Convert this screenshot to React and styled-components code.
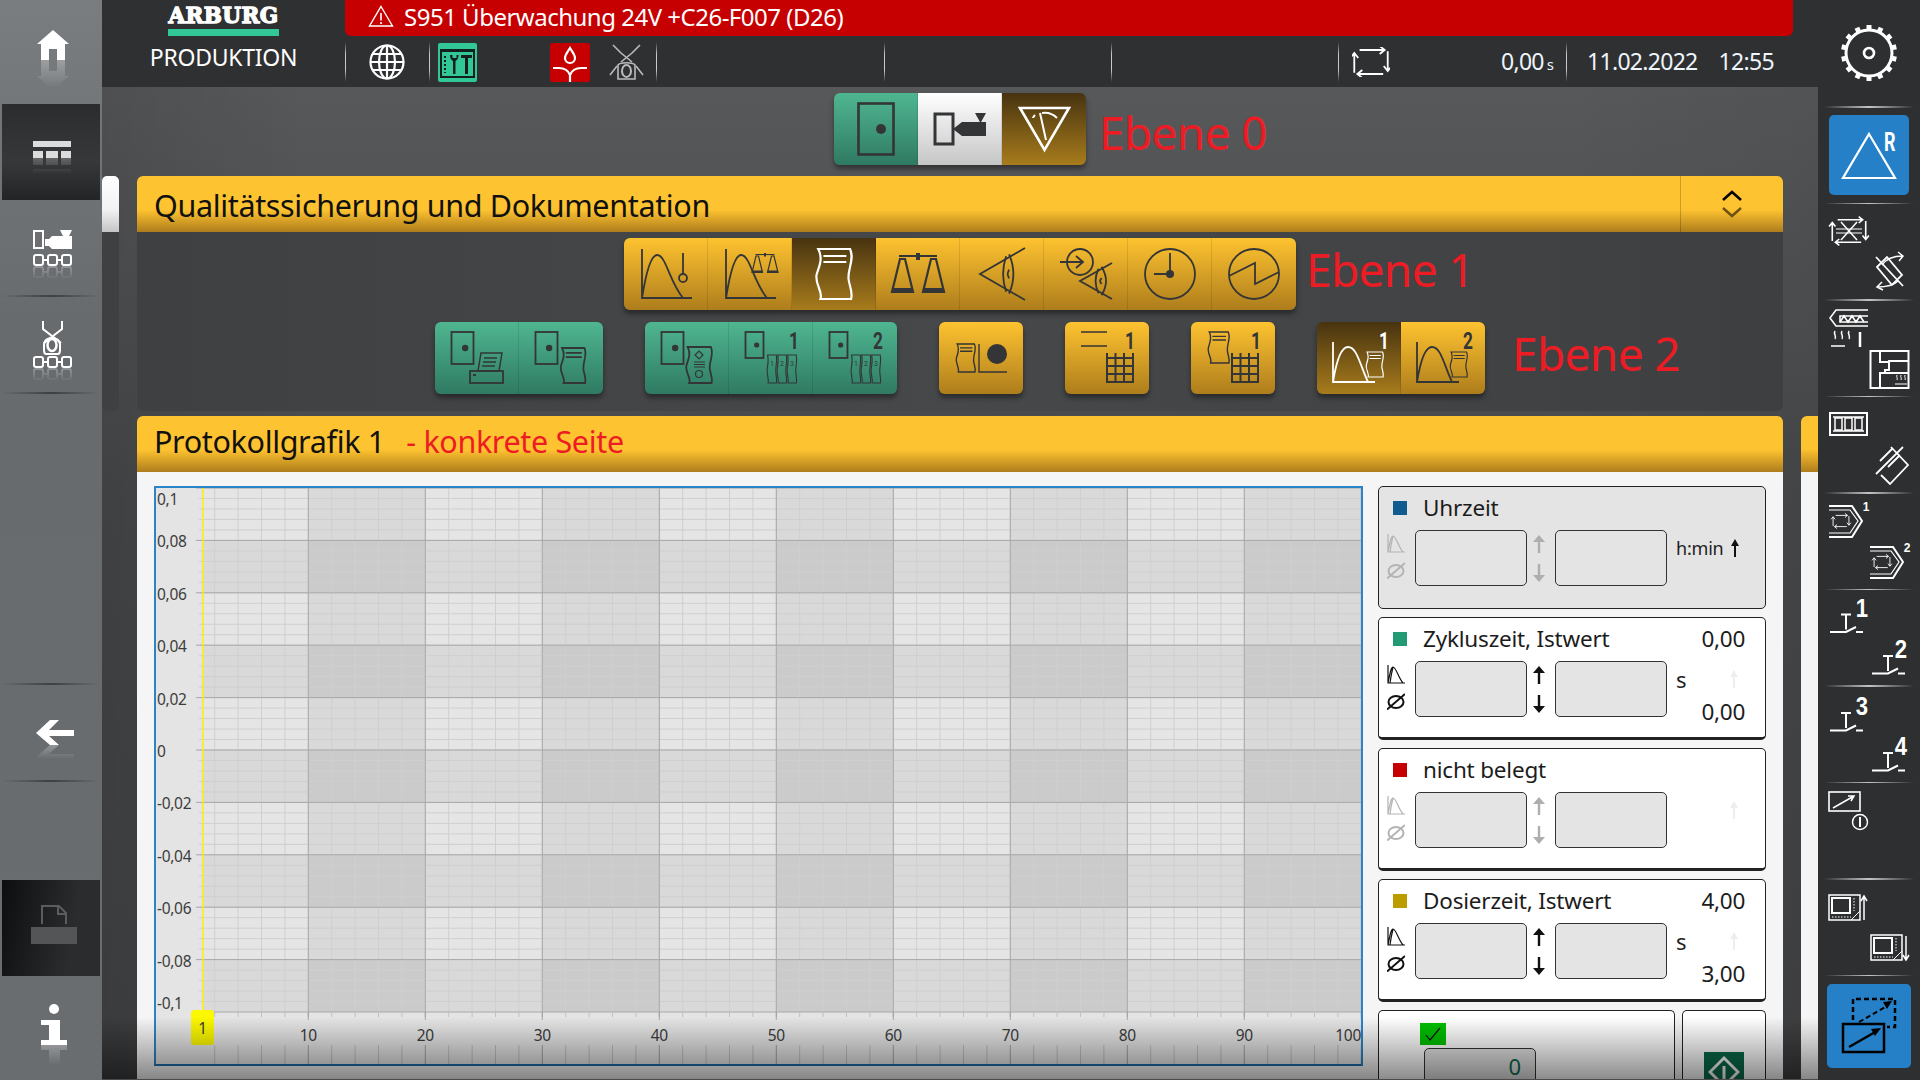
import styled, { createGlobalStyle } from 'styled-components'

const FONT = '"Noto Sans", "Open Sans", sans-serif'
const INK = '#333537'

const GlobalStyle = createGlobalStyle`
  html, body { margin: 0; padding: 0; background: #2e2f31; }
  body { font-family: ${FONT}; }
`

const Screen = styled.div`
  width: 1920px;
  height: 1080px;
  overflow: hidden;
  display: grid;
  grid-template-columns: 102px 1fr 102px;
  grid-template-rows: 1080px;
`

/* ---------- left rail ---------- */
const LeftRail = styled.nav`
  display: flex;
  flex-direction: column;
  min-height: 0;
  background: linear-gradient(#7a7d80, #686b6e 30%, #6a6d70);
`
const RailItem = styled.div`
  position: relative;
  flex: ${p => (p.$grow ? '1' : `0 0 ${p.$h}px`)};
  ${p => p.$rule && `
    &::after {
      content: '';
      position: absolute;
      left: 2px;
      right: 2px;
      bottom: 0;
      height: 2px;
      background: linear-gradient(90deg, transparent, #3d3f41 50%, transparent);
    }
  `}
  svg { display: block; }
`
const RailActive = styled.div`
  flex: 0 0 96px;
  margin: 0 2px;
  background: ${p => (p.$dim
    ? 'linear-gradient(100deg, #0d0e0f, #2a2c2e 70%)'
    : 'linear-gradient(#2b2c2e, #37383a 60%, #232426)')};
  svg { display: block; margin-left: -2px; }
`

const Mirror = ({ id, axis, fade = 28, children }) => (
  <>
    <defs>
      <linearGradient id={`${id}g`} gradientUnits="userSpaceOnUse" x1="0" x2="0" y1={axis} y2={axis + fade}>
        <stop offset="0" stopColor="#fff" stopOpacity=".28" />
        <stop offset="1" stopColor="#fff" stopOpacity="0" />
      </linearGradient>
      <mask id={id} maskUnits="userSpaceOnUse" x="0" y="0" width="102" height="200">
        <rect x="0" y={axis} width="102" height={fade} fill={`url(#${id}g)`} />
      </mask>
    </defs>
    {children}
    <g mask={`url(#${id})`}>
      <g transform={`translate(0 ${2 * axis}) scale(1 -1)`}>{children}</g>
    </g>
  </>
)

const Chain = ({ y }) => (
  <g fill="none" stroke="#fff" strokeWidth="2">
    <rect x="34" y={y} width="9" height="10" rx="2" />
    <rect x="48" y={y} width="9" height="10" rx="2" />
    <rect x="62" y={y} width="9" height="10" rx="2" />
    <path d={`M43 ${y + 5}h5M57 ${y + 5}h5`} />
  </g>
)

const LeftRailContent = () => (
  <LeftRail>
    <RailItem $h={104}>
      <svg width="102" height="104">
        <Mirror id="mHome" axis={60}>
          <path fill="#fff" d="M53 30l16 14h-4v16h-8V49h-8v11h-8V44h-4z" />
        </Mirror>
      </svg>
    </RailItem>
    <RailActive>
      <svg width="102" height="96">
        <Mirror id="mMenu" axis={54} fade={16}>
          <g fill="#dcdcdc">
            <rect x="33" y="37" width="38" height="6" />
            <rect x="33" y="47" width="10" height="7" />
            <rect x="46" y="47" width="12" height="7" />
            <rect x="61" y="47" width="10" height="7" />
          </g>
        </Mirror>
      </svg>
    </RailActive>
    <RailItem $h={97} $rule>
      <svg width="102" height="97">
        <Mirror id="mMach" axis={66} fade={14}>
          <rect x="34" y="31" width="9" height="17" fill="none" stroke="#fff" strokeWidth="2" />
          <path fill="#fff" d="M45 39h4l3-3h20v13H52l-3-3h-4zM60 30h12l-3 6h-6z" />
          <Chain y={55} />
        </Mirror>
      </svg>
    </RailItem>
    <RailItem $h={97} $rule>
      <svg width="102" height="97">
        <Mirror id="mMold" axis={71} fade={14}>
          <g fill="none" stroke="#fff" strokeWidth="2">
            <path d="M43 24v8l18 14M62 24v8L44 46" />
            <path d="M44 48c0-5 4-7 8-7s8 2 8 7v5c0 3-1 4-2 4H46c-1 0-2-1-2-4z" />
            <ellipse cx="52" cy="48" rx="4.5" ry="6" strokeWidth="2.5" />
          </g>
          <Chain y={60} />
        </Mirror>
      </svg>
    </RailItem>
    <RailItem $grow $rule />
    <RailItem $h={97} $rule>
      <svg width="102" height="97">
        <Mirror id="mBack" axis={60} fade={14}>
          <path fill="#fff" d="M36 48l14-13h9l-10 10h25v6H49l10 9h-9z" />
        </Mirror>
      </svg>
    </RailItem>
    <RailItem $h={98} />
    <RailActive $dim>
      <svg width="102" height="96">
        <g fill="none" stroke="#5b5c5e" strokeWidth="2">
          <path d="M42 44V26h17l7 7v11M58 26v8h8" />
        </g>
        <rect x="31" y="47" width="46" height="17" fill="#545556" />
      </svg>
    </RailActive>
    <RailItem $h={104}>
      <svg width="102" height="104">
        <Mirror id="mInfo" axis={69} fade={20}>
          <circle cx="54" cy="33" r="5" fill="#fff" />
          <path fill="#fff" d="M41 44h19v20h7v5H41v-5h8V49h-8z" />
        </Mirror>
      </svg>
    </RailItem>
  </LeftRail>
)

/* ---------- header ---------- */
const Header = styled.header`
  flex: 0 0 87px;
  display: flex;
  background: #2f3032;
  color: #fff;
`
const Brand = styled.div`
  flex: 0 0 243px;
  display: flex;
  flex-direction: column;
  align-items: center;
`
const LogoText = styled.div`
  margin-top: 2px;
  height: 27px;
  line-height: 27px;
  font-family: "DejaVu Serif", serif;
  font-weight: 700;
  font-size: 21.500px;
  letter-spacing: 0.4px;
  -webkit-text-stroke: 1.3px #fff;
`
const LogoBar = styled.div`
  width: 111px;
  height: 7px;
  background: #31c796;
`
const ModeLabel = styled.div`
  margin-top: 4px;
  font-size: 23px;
  line-height: 34px;
  letter-spacing: -0.25px;
`
const HeaderRest = styled.div`
  flex: 1;
  display: flex;
  flex-direction: column;
`
const AlarmBar = styled.div`
  height: 36px;
  margin-right: 25px;
  padding: 0 0 4px 23px;
  box-sizing: border-box;
  display: flex;
  align-items: center;
  gap: 10px;
  background: #c60000;
  border-radius: 0 0 6px 6px;
  font-size: 24px;
  letter-spacing: -0.5px;
`
const StatusRow = styled.div`
  display: flex;
  height: 40px;
  margin-top: 6px;
`
const StatusCell = styled.div`
  position: relative;
  flex: 0 0 ${p => p.$w}px;
  display: flex;
  align-items: center;
  justify-content: ${p => p.$justify || 'flex-start'};
  padding: 0 ${p => p.$pr || 0}px 0 ${p => p.$pl || 0}px;
  box-sizing: border-box;
  &::before {
    content: '';
    position: absolute;
    left: 0;
    top: 0;
    bottom: 0;
    width: 1px;
    background: linear-gradient(transparent, #c8c8c8 30%, #c8c8c8 70%, transparent);
  }
`
const TileIcon = styled.svg`
  flex: none;
  margin-left: ${p => p.$ml || 0}px;
  display: block;
`
const StatusText = styled.span`
  font-size: 23px;
  letter-spacing: -0.7px;
  color: #eef5fb;
  margin: 0 0 3px ${p => p.$ml || 0}px;
`
const TimerText = styled(StatusText)`
  margin-left: auto;
  small { font-size: 15px; margin-left: 3px; letter-spacing: 0; }
`

const CycleArrows = ({ x, y, w, h, sw = 1.6, a = 4, color = '#fff' }) => {
  const xl = x + 0.06 * w
  const xr = x + 0.94 * w
  const yt = y + 0.1 * h
  const yb = y + 0.9 * h
  return (
    <g fill="none" stroke={color} strokeWidth={sw}>
      <path d={`M${x + 0.2 * w} ${yt}H${x + 0.86 * w}m-${a} -${a * 0.8}l${a} ${a * 0.8}l-${a} ${a * 0.8}`} />
      <path d={`M${xr} ${y + 0.14 * h}V${y + 0.8 * h}m-${a * 0.8} -${a}l${a * 0.8} ${a}l${a * 0.8} -${a}`} />
      <path d={`M${x + 0.82 * w} ${yb}H${x + 0.14 * w}m${a} -${a * 0.8}l-${a} ${a * 0.8}l${a} ${a * 0.8}`} />
      <path d={`M${xl} ${y + 0.86 * h}V${y + 0.2 * h}m-${a * 0.8} ${a}l${a * 0.8} -${a}l${a * 0.8} ${a}`} />
    </g>
  )
}

const HeaderBar = () => (
  <Header>
    <Brand>
      <LogoText>ARBURG</LogoText>
      <LogoBar />
      <ModeLabel>PRODUKTION</ModeLabel>
    </Brand>
    <HeaderRest>
      <AlarmBar>
        <svg width="26" height="22" viewBox="0 0 26 22">
          <path d="M13 1.5L24.5 21H1.5z" fill="none" stroke="#fff" strokeWidth="1.4" />
          <path d="M13 8v7.5M13 17v2" stroke="#fff" strokeWidth="1.6" />
        </svg>
        <span>S951 Überwachung 24V +C26-F007 (D26)</span>
      </AlarmBar>
      <StatusRow>
        <StatusCell $w={84} $justify="center">
          <TileIcon width="36" height="36" viewBox="0 0 36 36" fill="none" stroke="#fff" strokeWidth="2.2">
            <circle cx="18" cy="18" r="16.5" />
            <ellipse cx="18" cy="18" rx="8" ry="16.5" />
            <path d="M18 1.5v33M1.5 18h33M4 10h28M4 26h28" />
          </TileIcon>
        </StatusCell>
        <StatusCell $w={227} $pl={9}>
          <TileIcon width="39" height="39" viewBox="0 0 39 39">
            <rect width="39" height="39" rx="2" fill="#31c796" />
            <rect x="3" y="7" width="33" height="27" fill="none" stroke="#15201c" strokeWidth="2" />
            <path d="M3 6h33v3H3z" fill="#15201c" />
            <path d="M7 13v17" stroke="#15201c" strokeWidth="2" strokeDasharray="2 2" />
            <path d="M12 12c0 3 1 5 3 6v13h2.500V18c2-1 3-3 3-6h-2v3h-4v-3zM23 12h11v3h-4v16h-3V15h-4z" fill="#15201c" />
          </TileIcon>
          <TileIcon $ml={73} width="40" height="39" viewBox="0 0 40 39">
            <rect width="40" height="39" rx="2" fill="#c60000" />
            <path d="M20 5c-3 5-5 7-5 10a5 5 0 0 0 10 0c0-3-2-5-5-10z" fill="none" stroke="#fff" strokeWidth="2.2" />
            <path d="M3 25h6c5 0 9 2 11 7 2-5 6-7 11-7h6M20 32v7" fill="none" stroke="#fff" strokeWidth="2.2" />
          </TileIcon>
          <TileIcon $ml={19} width="35" height="37" viewBox="0 0 35 37" fill="none" stroke="#bbb" strokeWidth="1.6">
            <path d="M4 1l8 8 11 9M31 1l-8 8-11 9M8 22l-7 9M27 22l7 9" />
            <path d="M9 21c2-3 15-3 17 0v14H9z" />
            <ellipse cx="17.5" cy="27" rx="4.5" ry="6" strokeWidth="2" />
          </TileIcon>
        </StatusCell>
        <StatusCell $w={228} />
        <StatusCell $w={227} />
        <StatusCell $w={227} />
        <StatusCell $w={228} $pl={14} $pr={12}>
          <TileIcon width="38" height="30" viewBox="0 0 38 30">
            <CycleArrows x={0} y={0} w={38} h={30} sw={1.8} a={5} />
          </TileIcon>
          <TimerText>0,00<small>s</small></TimerText>
        </StatusCell>
        <StatusCell $w={220} $pl={21}>
          <StatusText>11.02.2022</StatusText>
          <StatusText $ml={21}>12:55</StatusText>
        </StatusCell>
      </StatusRow>
    </HeaderRest>
  </Header>
)

/* ---------- level buttons ---------- */
const tones = {
  yellow: 'linear-gradient(#fec330, #ae7d1c)',
  green: 'linear-gradient(#4fb691, #2f7a62)',
  white: 'linear-gradient(#fff, #c6c6c6)',
  dark: 'linear-gradient(#473310, #a87c1c)',
}
const LevelRow = styled.div`
  display: grid;
  grid-template-columns: 1fr auto 1fr;
  align-items: center;
`
const CenterGroup = styled.div`
  grid-column: 2;
  display: flex;
  gap: 42px;
`
const ButtonGroup = styled.div`
  display: flex;
  border-radius: 6px;
  overflow: hidden;
  box-shadow: 0 4px 5px rgba(0, 0, 0, 0.4);
`
const LevelButton = styled.button`
  width: 84px;
  height: 72px;
  padding: 0;
  border: 0;
  background: ${p => tones[p.$tone]};
  color: ${p => (p.$tone === 'dark' ? '#fff' : INK)};
  & + & { box-shadow: -1px 0 0 rgba(0, 0, 0, 0.1); }
  svg {
    display: block;
    fill: none;
    stroke: currentColor;
    stroke-width: 1.8;
  }
  svg .solid { fill: currentColor; stroke: none; }
  svg text {
    fill: currentColor;
    stroke: none;
    font-family: "Roboto", ${FONT};
    font-weight: 700;
  }
  svg text.small { font-weight: 400; }
`
const Annotation = styled.div`
  margin: ${p => p.$top || 0}px 0 0 ${p => p.$left}px;
  font-size: 46px;
  font-weight: 400;
  line-height: 1;
  letter-spacing: -0.65px;
  color: #ed1c24;
  white-space: nowrap;
`

const wavy = (x, y, w, h) =>
  `M${x + 0.06 * w} ${y}H${x + 0.92 * w}C${x + 1.05 * w} ${y + 0.2 * h} ${x + 0.85 * w} ${y + 0.4 * h} ${x + 0.88 * w} ${y + 0.6 * h}` +
  `C${x + 0.9 * w} ${y + 0.75 * h} ${x + 1.0 * w} ${y + 0.85 * h} ${x + 0.95 * w} ${y + h}H${x + 0.12 * w}` +
  `C${x + 0.2 * w} ${y + 0.85 * h} ${x - 0.05 * w} ${y + 0.7 * h} ${x + 0.02 * w} ${y + 0.5 * h}C${x + 0.08 * w} ${y + 0.35 * h} ${x + 0.2 * w} ${y + 0.2 * h} ${x + 0.06 * w} ${y}Z`

const Doc = ({ x, y, w, h, lines = true, sw }) => (
  <g strokeWidth={sw}>
    <path d={wavy(x, y, w, h)} />
    {lines && (
      <path d={`M${x + 0.2 * w} ${y + 0.14 * h}h${0.62 * w}M${x + 0.2 * w} ${y + 0.26 * h}h${0.62 * w}`} />
    )}
  </g>
)
const Door = ({ x = 16.5, w = 22, h = 32, r = 3.2 }) => (
  <g>
    <rect x={x} y="10" width={w} height={h} />
    <circle className="solid" cx={x + w * 0.62} cy={10 + h / 2} r={r} />
  </g>
)
const Peak = ({ left = 18, top = 11, end = 60, right = 68, peakX = 33, peakY = 17 }) => (
  <path d={`M${left} ${top}V60H${right}M${left} 60C${left + 4} 35 ${peakX - 6} ${peakY} ${peakX} ${peakY}C${peakX + 9} ${peakY} ${peakX + 12} 43 ${end} 60`} />
)
const Scale = ({ cx, y, s = 1, sw = 2.2 }) => (
  <g transform={`translate(${cx} ${y}) scale(${s})`}>
    <path strokeWidth={sw / s} d="M-19 3H19" />
    <rect className="solid" x="-2" y="0" width="4" height="7" />
    <path strokeWidth={sw / s} d="M-18 6h5l8 33h-21zM13 6h5l8 33H5z" />
    <rect className="solid" x="-26" y="35" width="21" height="4" />
    <rect className="solid" x="5" y="35" width="21" height="4" />
  </g>
)
const Grid4 = ({ x }) => (
  <path strokeWidth="2" d={`M${x} 31v30M${x + 8.5} 31v30M${x + 17} 31v30M${x + 26} 31v30M${x} 36h26M${x} 44h26M${x} 52h26M${x} 60h26`} />
)
const Num = ({ x = 65, y = 27, children }) => (
  <text transform={`translate(${x} ${y}) scale(.72 1)`} fontSize="24" textAnchor="middle">{children}</text>
)
const Triple = () => (
  <g>
    <path strokeWidth="1.1" d={wavy(38, 33, 10, 28)} />
    <path strokeWidth="1.1" d={wavy(48, 33, 10, 28)} />
    <path strokeWidth="1.1" d={wavy(58, 33, 10, 28)} />
    <text className="small" x="43" y="44" fontSize="7" textAnchor="middle">1</text>
    <text className="small" x="53" y="44" fontSize="7" textAnchor="middle">2</text>
    <text className="small" x="63" y="44" fontSize="7" textAnchor="middle">3</text>
  </g>
)
const Eye = ({ tip, top, bottom, right }) => {
  const my = (top + bottom) / 2
  const k = (right - tip) * 0.58 + tip
  const d = (bottom - top) * 0.34
  return (
    <g>
      <path d={`M${right} ${top}L${tip} ${my}L${right} ${bottom}`} />
      <path d={`M${k} ${my - d}C${k - 4} ${my - d / 3} ${k - 4} ${my + d / 3} ${k} ${my + d}`} />
      <path d={`M${k + 3} ${my - d - 2}C${k + 9} ${my - d / 3} ${k + 9} ${my + d / 3} ${k + 3} ${my + d + 2}`} />
      <path d={`M${k + 3} ${my - d / 4}C${k + 1} ${my} ${k + 1} ${my} ${k + 3} ${my + d / 4}`} />
    </g>
  )
}

const B = ({ tone, children }) => (
  <LevelButton $tone={tone}>
    <svg width="84" height="72" viewBox="0 0 84 72">{children}</svg>
  </LevelButton>
)

const LevelZero = () => (
  <LevelRow>
    <CenterGroup>
      <ButtonGroup>
        <B tone="green">
          <rect x="24.5" y="10.5" width="35" height="51" strokeWidth="2.6" />
          <circle className="solid" cx="47" cy="36" r="5" />
        </B>
        <B tone="white">
          <rect x="17" y="21" width="18" height="30" strokeWidth="3" />
          <path className="solid" d="M35 36l9-7h24v14H44z" />
          <path className="solid" d="M57 20h11l-5.500 10z" />
        </B>
        <B tone="dark">
          <path strokeWidth="2.6" d="M18 15h49L42.500 57z" />
          <path strokeWidth="2" d="M38 20l6 27M31 25c0-1 1-2 2-3M40 20c6-1 11 1 15 5" />
        </B>
      </ButtonGroup>
    </CenterGroup>
    <Annotation $left={13} $top={6}>Ebene 0</Annotation>
  </LevelRow>
)

const LevelOne = () => (
  <LevelRow>
    <CenterGroup>
      <ButtonGroup>
        <B tone="yellow">
          <Peak end={59} />
          <path d="M59 15v21" /><circle cx="59" cy="40" r="4" />
        </B>
        <B tone="yellow">
          <Peak end={59} />
          <Scale cx={57} y={15} s={0.5} sw={1.2} />
        </B>
        <B tone="dark">
          <Doc x={24} y={11} w={37} h={50} sw={2.2} />
        </B>
        <B tone="yellow">
          <Scale cx={42} y={15} />
        </B>
        <B tone="yellow">
          <Eye tip={20} top={10} bottom={62} right={65} />
        </B>
        <B tone="yellow">
          <circle cx="36" cy="24" r="13" />
          <path d="M16 24h23m-7-6l7 6-7 6" />
          <Eye tip={36} top={25} bottom={61} right={68} />
        </B>
        <B tone="yellow">
          <circle cx="42" cy="36" r="25" />
          <path d="M42 15v21H26" /><circle className="solid" cx="42" cy="36" r="4" />
        </B>
        <B tone="yellow">
          <circle cx="42" cy="36" r="25" />
          <path d="M17 38l26-13v21l24-12" />
        </B>
      </ButtonGroup>
    </CenterGroup>
    <Annotation $left={10} $top={-10}>Ebene 1</Annotation>
  </LevelRow>
)

const LevelTwo = () => (
  <LevelRow>
    <CenterGroup>
      <ButtonGroup>
        <B tone="green">
          <Door />
          <path strokeWidth="1.5" d="M46 31h21l-3 18H43zM49 36h13M48 40h13M47 44h13" />
          <rect x="35" y="49" width="33" height="12" /><rect className="solid" x="38" y="52" width="3" height="2" />
        </B>
        <B tone="green">
          <Door />
          <Doc x={41.5} y={26} w={26} h={35} />
        </B>
      </ButtonGroup>
      <ButtonGroup>
        <B tone="green">
          <Door />
          <Doc x={41} y={25} w={27} h={36} lines={false} />
          <path strokeWidth="1.2" d="M54 29l4 4-4 4-4-4zM49 40h11M49 42.500h11M49 45h11" />
          <circle strokeWidth="1.2" cx="54" cy="52" r="3.500" />
        </B>
        <B tone="green">
          <Door x={16.5} w={18} h={26} r={2.6} />
          <Num>1</Num>
          <Triple />
        </B>
        <B tone="green">
          <Door x={16.5} w={18} h={26} r={2.6} />
          <Num>2</Num>
          <Triple />
        </B>
      </ButtonGroup>
      <ButtonGroup>
        <B tone="yellow">
          <Doc x={17} y={22} w={20} h={28} sw={1.4} />
          <path d="M40 22v28h28" strokeWidth="1.4" />
          <circle className="solid" cx="58" cy="32" r="10" />
        </B>
      </ButtonGroup>
      <ButtonGroup>
        <B tone="yellow">
          <path d="M16 10h26M16 24h26" strokeWidth="1.4" />
          <Num>1</Num>
          <Grid4 x={42} />
        </B>
      </ButtonGroup>
      <ButtonGroup>
        <B tone="yellow">
          <Doc x={17} y={10} w={22} h={31} sw={1.4} />
          <Num>1</Num>
          <Grid4 x={41} />
        </B>
      </ButtonGroup>
      <ButtonGroup>
        <B tone="dark">
          <Peak left={16} top={20} end={51} right={58} peakX={31} peakY={25} />
          <Doc x={49} y={30} w={18} h={25} sw={1.2} />
          <Num x={67} y={27}>1</Num>
        </B>
        <B tone="yellow">
          <Peak left={16} top={20} end={51} right={58} peakX={31} peakY={25} />
          <Doc x={49} y={30} w={18} h={25} sw={1.2} />
          <Num x={67} y={27}>2</Num>
        </B>
      </ButtonGroup>
    </CenterGroup>
    <Annotation $left={27} $top={-11}>Ebene 2</Annotation>
  </LevelRow>
)

/* ---------- main area ---------- */
const CenterColumn = styled.div`
  position: relative;
  display: flex;
  flex-direction: column;
  min-width: 0;
  min-height: 0;
`
const Main = styled.main`
  flex: 1;
  min-height: 0;
  padding-top: 6px;
  background: linear-gradient(90deg, rgba(0, 0, 0, 0.1), transparent 12%, transparent 85%, rgba(0, 0, 0, 0.06)),
    linear-gradient(#57585a, #4c4d4f 30%, #47484a 40%, #404143);
  display: flex;
  flex-direction: column;
`
const Sections = styled.div`
  margin-top: 11px;
  flex: 1;
  min-height: 0;
  display: grid;
  grid-template-columns: 17px 1fr 17px;
  grid-template-rows: 235px minmax(0, 1fr);
  column-gap: 18px;
  row-gap: 5px;
`
const ScrollTrack = styled.div`
  background: #3f4042;
  border-radius: 5px 0 5px 5px;
`
const ScrollThumb = styled.div`
  height: 56px;
  border-radius: 5px 5px 0 0;
  background: linear-gradient(#fff, #f2f2f2 60%, #c4c4c4);
`
const Panel = styled.section`
  background: linear-gradient(90deg, #3f4042, #47484a 50%, #3e3f41);
  border-radius: 6px;
`
const SectionBar = styled.div`
  flex: none;
  height: 56px;
  display: flex;
  align-items: stretch;
  padding-left: 17px;
  border-radius: 6px 6px 0 0;
  background: linear-gradient(#fec330 60%, #ae7d1c);
  font-size: 30.500px;
  letter-spacing: -0.35px;
  color: #111;
`
const SectionTitle = styled.div`
  flex: 1;
  line-height: ${p => p.$lh}px;
  white-space: nowrap;
`
const RedNote = styled.span`
  color: #ed1c24;
  margin-left: 14px;
`
const Expander = styled.div`
  flex: 0 0 102px;
  display: flex;
  align-items: center;
  justify-content: center;
  border-left: 1px solid rgba(0, 0, 0, 0.2);
`
const PanelBody = styled.div`
  padding-top: 6px;
  display: flex;
  flex-direction: column;
  gap: 12px;
`
const LowerGutter = styled.div``
const SidePeek = styled.div`
  border-radius: 6px 0 0 0;
  background: linear-gradient(#fec330, #fec330 33px, #ae7d1c 56px, #f5f5f5 56px);
`
const DetailPage = styled.section`
  display: flex;
  flex-direction: column;
  min-height: 0;
  overflow: hidden;
`
const DetailBody = styled.div`
  flex: 1;
  display: flex;
  gap: 15px;
  align-items: flex-start;
  padding: 14px 17px 0;
  background: #f5f5f5;
`
const BottomFade = styled.div`
  position: absolute;
  left: 0;
  right: 0;
  bottom: 0;
  height: 62px;
  pointer-events: none;
  background: linear-gradient(rgba(0, 0, 0, 0), rgba(0, 0, 0, 0.45));
  border-bottom: 1px solid #4a4a4a;
`

/* ---------- chart ---------- */
const ChartBox = styled.div`
  flex: 0 0 1209px;
  height: 580px;
  box-sizing: border-box;
  border: 2px solid #2a84c8;
  border-bottom-color: #1f6aa3;
  background: #e4e4e4;
  svg { display: block; }
  svg text { font-family: ${FONT}; font-size: 15.500px; fill: #3c3c3c; letter-spacing: -0.3px; }
`

const X0 = 203 - 156
const X_STEP = 11.7
const Y_STEP = 52.4
const PLOT_BOTTOM = Y_STEP * 10
const xAt = n => X0 + (n - 1) * X_STEP
const Y_LABELS = ['0,1', '0,08', '0,06', '0,04', '0,02', '0', '-0,02', '-0,04', '-0,06', '-0,08', '-0,1']
const range = (n, f) => Array.from({ length: n }, (_, i) => f(i))

const Chart = () => {
  const right = xAt(100) + 11.7
  const colBands = range(10, i => {
    const from = i === 0 ? X0 : xAt(i * 10)
    return { x: from, w: xAt(i * 10 + 10) - from, dark: i % 2 === 1 }
  })
  const rowBands = range(10, i => ({ y: i * Y_STEP, dark: i % 2 === 1 }))
  return (
    <ChartBox>
      <svg width="1205" height="576">
        {colBands.map(c => rowBands.map(r => (
          <rect
            key={`${c.x}-${r.y}`}
            x={c.x}
            y={r.y}
            width={c.w}
            height={Y_STEP}
            fill={c.dark && r.dark ? '#cbcbcb' : c.dark || r.dark ? '#d9d9d9' : '#e5e5e5'}
          />
        )))}
        {/* minor grid */}
        {range(50, i => (
          <line key={i} x1={xAt(i * 2 + 2)} x2={xAt(i * 2 + 2)} y1="0" y2={PLOT_BOTTOM} stroke="#cfcfcf" strokeWidth="1" />
        ))}
        {range(50, i => (
          <line key={i} x1={X0 - 4} x2={right} y1={(i * Y_STEP) / 5} y2={(i * Y_STEP) / 5} stroke="#cfcfcf" strokeWidth="1" />
        ))}
        {/* major grid */}
        {range(10, i => (
          <line key={i} x1={xAt(i * 10 + 10)} x2={xAt(i * 10 + 10)} y1="0" y2={PLOT_BOTTOM + 8} stroke="#a8a8a8" strokeWidth="1" />
        ))}
        {range(11, i => (
          <line key={i} x1={X0 - 7} x2={right} y1={i * Y_STEP} y2={i * Y_STEP} stroke="#a8a8a8" strokeWidth="1" />
        ))}
        {/* ticks under the plot */}
        {range(50, i => (
          <g key={i} stroke={(i + 1) % 5 === 0 ? '#a0a0a0' : '#c0c0c0'}>
            <line x1={xAt(i * 2 + 2)} x2={xAt(i * 2 + 2)} y1={PLOT_BOTTOM} y2={PLOT_BOTTOM + 5} />
            <line x1={xAt(i * 2 + 2)} x2={xAt(i * 2 + 2)} y1={PLOT_BOTTOM + 33} y2="576" />
          </g>
        ))}
        <line x1={X0} x2={X0} y1="0" y2={PLOT_BOTTOM} stroke="#ffee00" strokeWidth="1.500" />
        {Y_LABELS.map((l, i) => {
          let y = i * Y_STEP + 7
          if (i === 0) y = 17
          if (i === 10) y = PLOT_BOTTOM - 3
          return <text key={l} x="1" y={y}>{l}</text>
        })}
        {range(9, i => (
          <text key={i} x={xAt((i + 1) * 10)} y="553" textAnchor="middle">{(i + 1) * 10}</text>
        ))}
        <text x="1205" y="553" textAnchor="end">100</text>
        <rect x="35" y="522" width="23" height="35" rx="3" fill="#fbf800" />
        <text x="46.500" y="546" textAnchor="middle">1</text>
      </svg>
    </ChartBox>
  )
}

/* ---------- curve cards ---------- */
const CardColumn = styled.div`
  flex: 1;
  display: flex;
  flex-direction: column;
  gap: 8px;
`
const Card = styled.div`
  flex: none;
  height: 123px;
  box-sizing: border-box;
  padding-left: 8px;
  border: 1px solid #222;
  border-bottom-width: ${p => (p.$grey ? 1 : 3)}px;
  border-radius: 5px;
  background: ${p => (p.$grey ? '#e4e4e4' : '#fff')};
`
const CardHead = styled.div`
  height: 43px;
  display: flex;
  align-items: center;
  padding: 0 20px 0 6px;
  margin-top: -1px;
`
const Swatch = styled.i`
  flex: 0 0 14px;
  height: 14px;
  background: ${p => p.$c};
  margin-right: 16px;
`
const CardTitle = styled.div`
  flex: 1;
  font-size: 22.500px;
  letter-spacing: -0.2px;
  color: #1c1c1c;
`
const CardValue = styled.div`
  font-size: 22.500px;
  letter-spacing: -0.3px;
  color: #1c1c1c;
  text-align: right;
`
const CardBody = styled.div`
  display: flex;
  margin-top: 1px;
`
const LimitIcons = styled.div`
  flex: 0 0 18px;
  margin-right: 10px;
  display: flex;
  flex-direction: column;
  gap: 9px;
  padding-top: 4px;
  color: ${p => (p.$off ? '#b4b4b4' : '#111')};
  svg { display: block; }
`
const Field = styled.div`
  flex: 0 0 112px;
  height: 56px;
  box-sizing: border-box;
  border: 1px solid #333;
  border-radius: 5px;
  background: #e4e4e4;
`
const ArrowCol = styled.div`
  flex: 0 0 28px;
  box-sizing: border-box;
  padding: 5px 5px 0 0;
  display: flex;
  flex-direction: column;
  align-items: center;
  gap: 11px;
  color: ${p => (p.$off ? '#aeaeae' : '#111')};
  svg { display: block; }
`
const UnitCol = styled.div`
  flex: 0 0 69px;
  margin-left: 9px;
  display: grid;
  grid-template-columns: 1fr 22px;
  grid-template-rows: 36px 28px;
  align-items: center;
`
const UnitText = styled.div`
  font-size: ${p => (p.$long ? 18 : 22)}px;
  letter-spacing: -0.2px;
  color: #222;
`
const TrendArrow = styled.div`
  justify-self: center;
  color: ${p => (p.$faint ? '#eeeeee' : '#111')};
  svg { display: block; }
`
const LowerValue = styled(CardValue)`
  grid-column: 1 / 3;
`
const Arrow = ({ up, w = 2.4 }) => (
  <svg width="14" height="18" viewBox="0 0 14 18">
    <path
      fill="currentColor"
      d={up ? `M7 0l6 7H${7 + w / 2}v11h-${w}V7H1z` : `M7 18l6-7H${7 + w / 2}V0h-${w}v11H1z`}
    />
  </svg>
)
const PeakMini = () => (
  <svg width="18" height="19" viewBox="0 0 18 19" fill="none" stroke="currentColor" strokeWidth="1.2">
    <path d="M1 0v18h17M1 18C3 8 4 2 6 2c3 0 5 10 10 16M3 18C4 10 5 6 6 2" />
  </svg>
)
const Diameter = () => (
  <svg width="18" height="17" viewBox="0 0 18 17" fill="none" stroke="currentColor" strokeWidth="2">
    <ellipse cx="9" cy="9" rx="7.500" ry="6" />
    <path d="M0 16.500L18 1" />
  </svg>
)

const CurveCard = ({ color, title, top, bottom, unit, off, grey, trendDark }) => (
  <Card $grey={grey}>
    <CardHead>
      <Swatch $c={color} />
      <CardTitle>{title}</CardTitle>
      {top && <CardValue>{top}</CardValue>}
    </CardHead>
    <CardBody>
      <LimitIcons $off={off}>
        <PeakMini />
        <Diameter />
      </LimitIcons>
      <Field />
      <ArrowCol $off={off}>
        <Arrow up />
        <Arrow />
      </ArrowCol>
      <Field />
      <UnitCol>
        <UnitText $long={unit && unit.length > 1}>{unit}</UnitText>
        <TrendArrow $faint={!trendDark}>
          <svg width="14" height="18" viewBox="0 0 14 18">
            <path fill="currentColor" d="M7 0l4 7H8v11H6V7H3z" />
          </svg>
        </TrendArrow>
        {bottom && <LowerValue>{bottom}</LowerValue>}
      </UnitCol>
    </CardBody>
  </Card>
)

const BottomRow = styled.div`
  flex: none;
  display: flex;
  gap: 7px;
`
const CutCard = styled.div`
  flex: ${p => (p.$narrow ? '0 0 84px' : '1')};
  height: 90px;
  box-sizing: border-box;
  border: 1px solid #222;
  border-bottom: 0;
  border-radius: 5px 5px 0 0;
  background: #fff;
  padding: ${p => (p.$narrow ? '41px 0 0 21px' : '12px 0 0 41px')};
`
const CheckBox = styled.div`
  width: 26px;
  height: 22px;
  background: #00c000;
  display: flex;
  align-items: center;
  justify-content: center;
`
const CountField = styled(Field)`
  width: 112px;
  margin: 3px 0 0 4px;
  padding: 2px 14px 0 0;
  text-align: right;
  font-size: 22px;
  color: #0a6a4a;
`

/* ---------- right rail ---------- */
const RightRail = styled.aside`
  background: #2e2f31;
  display: flex;
  flex-direction: column;
  align-items: center;
  min-height: 0;
`
const GearSlot = styled.div`
  flex: 0 0 106px;
  display: flex;
  align-items: center;
  justify-content: center;
  svg { display: block; }
`
const RailRule = styled.div`
  align-self: stretch;
  flex: 0 0 1.500px;
  margin: 0 6px;
  background: linear-gradient(90deg, transparent, #c4c4c4 50%, transparent);
`
const BlueTile = styled.div`
  flex: 0 0 ${p => p.$size}px;
  width: ${p => p.$size}px;
  margin: ${p => p.$margin};
  border-radius: 5px;
  background: #2680c8;
  svg { display: block; }
  svg text { font-family: "Roboto", ${FONT}; font-weight: 700; fill: #fff; }
`
const Slot = styled.svg`
  display: block;
  flex: 0 0 ${p => p.$h || 95}px;
  fill: none;
  stroke: #fff;
  stroke-width: 1.5;
  text { fill: #fff; stroke: none; font-family: "Liberation Sans", ${FONT}; font-weight: 700; }
  .solid { fill: #fff; stroke: none; }
`

const Gear = () => (
  <svg width="58" height="58" viewBox="-29 -29 58 58" fill="none" stroke="#fff">
    <circle r="23" strokeWidth="3" />
    <circle r="5" strokeWidth="2.6" />
    {range(14, i => (
      <rect key={i} x="-2.500" y="-28" width="5" height="6" fill="#fff" stroke="none" transform={`rotate(${(i * 360) / 14})`} />
    ))}
  </svg>
)

const Contact = ({ x, y, n, nx, ny }) => (
  <g strokeWidth="2">
    <path d={`M${x + 11} ${y}h10M${x + 16} ${y}v15`} />
    <path d={`M${x} ${y + 17.5}h16l10-5M${x + 26} ${y + 17.5}h7`} />
    <text transform={`translate(${nx} ${ny}) scale(.85 1)`} fontSize="26" textAnchor="middle">{n}</text>
  </g>
)
const Chevrons = ({ x, y, n }) => (
  <g>
    <path strokeWidth="2" d={`M${x} ${y + 1}h23l10 15-10 16H${x}`} />
    <path strokeWidth="1.200" d={`M${x} ${y + 5}h21l8 11-8 12H${x}`} />
    <CycleArrows x={x + 3} y={y + 9} w={18} h={14} sw={0.9} a={2.5} />
    <text x={x + 37} y={y + 6} fontSize="12" textAnchor="middle">{n}</text>
  </g>
)
const Monitor = ({ x, y, w = 31, h = 25 }) => (
  <g>
    <rect x={x} y={y} width={w} height={h} />
    <rect x={x + 3} y={y + 3} width={w - 13} height={h - 10} strokeWidth="2" />
    <path strokeWidth="1" strokeDasharray="1.500 1.500" d={`M${x + 3} ${y + h - 3}h${w - 12}M${x + w - 6} ${y + 3}v${h - 12}`} />
    <path strokeWidth="1" d={`M${x + w - 9} ${y + h}l${9} -${9}`} />
  </g>
)

const RightRailContent = () => (
  <RightRail>
    <GearSlot><Gear /></GearSlot>
    <RailRule />
    <BlueTile $size={80} $margin="7px 0 8px">
      <svg width="80" height="80" viewBox="0 0 80 80" fill="none" stroke="#fff" strokeWidth="2.200">
        <path d="M40 19l26 44H14z" />
        <text transform="translate(55 36) scale(.72 1)" fontSize="25" stroke="none">R</text>
      </svg>
    </BlueTile>
    <RailRule />
    <Slot width="102" height="95">
      <CycleArrows x={12} y={13} w={38} h={28} />
      <path d="M18 25h26M18 29h26" strokeWidth="1.200" />
      <path d="M23 18l16 18M39 18L23 36" />
      <path strokeWidth="1.800" d="M58 53l27 29M59 63l10-10 15 18-10 10z" />
      <path d="M64 61c4-6 12-9 21-9m-5-4 5 4-4 5M80 77c-4 4-12 6-21 6m5-5-5 5 6 3" />
    </Slot>
    <RailRule />
    <Slot width="102" height="95">
      <path strokeWidth="1.600" d="M50 9H18l-6 8 6 8h32M50 15H22v6h28" />
      <path strokeWidth="1.600" d="M22 21l4-6 4 6 4-6 4 6 4-6 4 6" />
      <path d="M17 30c-2 3 2 5 0 8M24 30c-2 3 2 5 0 8M31 30c-2 3 2 5 0 8M13 45h14" />
      <path strokeWidth="2.500" d="M42 31v15" />
      <rect x="52.500" y="50" width="38" height="37" strokeWidth="2" />
      <path strokeWidth="2" d="M62 50v11h9v8h-4v3h-5v15M71 61v-1h19M66 72h24" />
      <path strokeWidth="1" d="M79 74c-1 2 1 3 0 5M83 74c-1 2 1 3 0 5M87 74c-1 2 1 3 0 5M77 83h12" />
    </Slot>
    <RailRule />
    <Slot width="102" height="96">
      <rect x="12" y="16" width="37" height="22" strokeWidth="2" />
      <path d="M15 20h31M15 34h31" />
      <rect x="17" y="21" width="7" height="12" /><rect x="27" y="21" width="7" height="12" /><rect x="37" y="21" width="7" height="12" />
      <path strokeWidth="1.800" d="M73 50l17 18-18 19-9-9M58 77l27-27M62 64l13-13M70 70l12-12" />
    </Slot>
    <RailRule />
    <Slot width="102" height="95">
      <Chevrons x={11} y={11} n="1" />
      <Chevrons x={52} y={52} n="2" />
    </Slot>
    <RailRule />
    <Slot width="102" height="95">
      <Contact x={12} y={24.5} n="1" nx={44} ny={27} />
      <Contact x={54} y={66} n="2" nx={83} ny={68} />
    </Slot>
    <RailRule />
    <Slot width="102" height="95">
      <Contact x={12} y={26} n="3" nx={44} ny={28} />
      <Contact x={54} y={66} n="4" nx={83} ny={68} />
    </Slot>
    <RailRule />
    <Slot width="102" height="96">
      <rect x="11" y="9" width="31" height="19" strokeWidth="1.600" />
      <path d="M15 25l21-12m-6 0 6 0-3 5" />
      <circle cx="42" cy="39" r="7.500" />
      <path strokeWidth="2" d="M42 34v10" />
    </Slot>
    <RailRule />
    <Slot width="102" height="95">
      <Monitor x={11} y={15} />
      <path d="M46 40V16m-3 5 3-5 3 5" />
      <Monitor x={53} y={55} />
      <path d="M88 56v24m-3-5 3 5 3-5" />
    </Slot>
    <RailRule />
    <BlueTile $size={84} $margin="8px 0 0">
      <svg width="84" height="84" viewBox="0 0 84 84" fill="none" stroke="#000" strokeWidth="2">
        <path strokeWidth="2.500" strokeDasharray="5 3" d="M26 36V15h42v28H60" />
        <path strokeWidth="2" strokeDasharray="5 3" d="M32 38l28-16" />
        <path fill="#000" stroke="none" d="M65 17l-9 1 4 7z" />
        <rect x="16" y="40" width="41" height="28" strokeWidth="2.500" />
        <path strokeWidth="2.500" d="M22 63l28-16" />
        <path fill="#000" stroke="none" d="M54 44l-10 1 4 7z" />
      </svg>
    </BlueTile>
  </RightRail>
)

export default function App() {
  return (
    <>
      <GlobalStyle />
      <Screen>
        <LeftRailContent />
        <CenterColumn>
          <HeaderBar />
          <Main>
            <LevelZero />
            <Sections>
              <ScrollTrack><ScrollThumb /></ScrollTrack>
              <Panel>
                <SectionBar>
                  <SectionTitle $lh={58}>Qualitätssicherung und Dokumentation</SectionTitle>
                  <Expander>
                    <svg width="20" height="28" viewBox="0 0 20 28" fill="none" strokeWidth="2.500">
                      <path d="M1 10l9-8 9 8" stroke="#000" />
                      <path d="M1 18l9 8 9-8" stroke="#6d5212" />
                    </svg>
                  </Expander>
                </SectionBar>
                <PanelBody>
                  <LevelOne />
                  <LevelTwo />
                </PanelBody>
              </Panel>
              <span />
              <LowerGutter />
              <DetailPage>
                <SectionBar>
                  <SectionTitle $lh={50}>Protokollgrafik 1 <RedNote>- konkrete Seite</RedNote></SectionTitle>
                </SectionBar>
                <DetailBody>
                  <Chart />
                  <CardColumn>
                    <CurveCard grey off color="#0f5a8f" title="Uhrzeit" unit="h:min" trendDark />
                    <CurveCard color="#229a74" title="Zykluszeit, Istwert" top="0,00" bottom="0,00" unit="s" />
                    <CurveCard off color="#c60000" title="nicht belegt" />
                    <CurveCard color="#bd9c00" title="Dosierzeit, Istwert" top="4,00" bottom="3,00" unit="s" />
                    <BottomRow>
                      <CutCard>
                        <CheckBox>
                          <svg width="16" height="14" viewBox="0 0 16 14" fill="none" stroke="#111" strokeWidth="1.200">
                            <path d="M1 8l4 5L15 1" />
                          </svg>
                        </CheckBox>
                        <CountField>0</CountField>
                      </CutCard>
                      <CutCard $narrow>
                        <svg width="40" height="40" viewBox="0 0 40 40">
                          <rect width="40" height="40" fill="#0a6a4a" />
                          <path d="M20 4l16 16-16 16L4 20z" fill="#fff" />
                          <path d="M20 8l12 12-12 12L8 20z" fill="#0a6a4a" />
                          <path d="M20 14v14" stroke="#fff" strokeWidth="3" />
                        </svg>
                      </CutCard>
                    </BottomRow>
                  </CardColumn>
                </DetailBody>
              </DetailPage>
              <SidePeek />
            </Sections>
          </Main>
          <BottomFade />
        </CenterColumn>
        <RightRailContent />
      </Screen>
    </>
  )
}
